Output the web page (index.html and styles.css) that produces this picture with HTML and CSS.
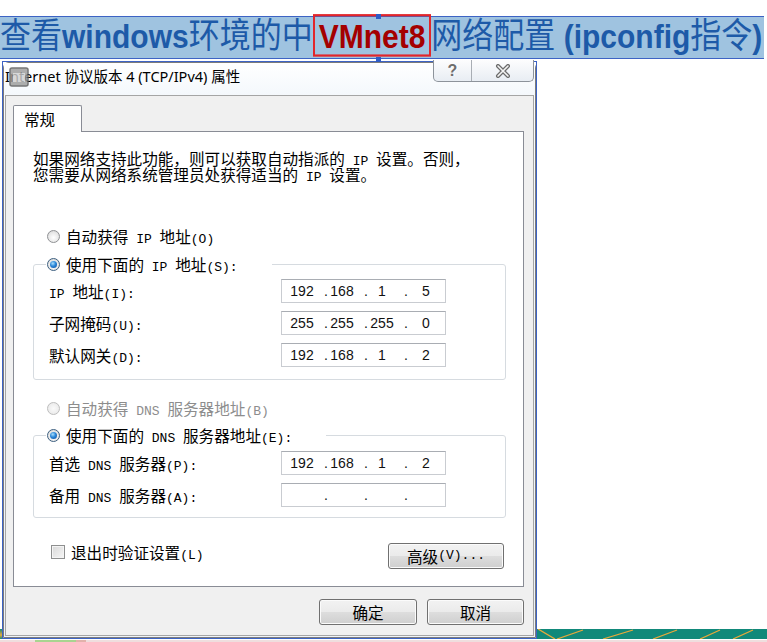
FILE: index.html
```html
<!DOCTYPE html>
<html lang="zh-CN">
<head>
<meta charset="utf-8">
<title>VMnet8 网络配置</title>
<link rel="stylesheet" href="styles.css">
</head>
<body>
<div class="page">
  <header class="band">
    <h1 class="headline">查看<b class="en">windows</b>环境的中<span class="vm en">VMnet8</span>网络配置<b class="en"> (ipconfig</b>指令<b class="en">)</b></h1>
    <i class="handle handle-top"></i>
    <i class="handle handle-bottom"></i>
  </header>

  <div class="stage">
    <div class="slide-edge slide-edge--left"><span class="stripe"></span></div>
    <div class="dialog">
      <div class="window">
        <div class="titlebar">
          <svg class="app-icon" width="20" height="20" viewBox="0 0 20 20">
            <rect x="1" y="1" width="18" height="18" rx="2" fill="#9a9a9a" stroke="#555" stroke-width="1.5"/>
            <rect x="4" y="6" width="12" height="9" fill="#cfcfcf"/>
          </svg>
          <div class="title-text">Internet 协议版本 4 (TCP/IPv4) 属性</div>
          <div class="caps">
            <div class="cap cap-help">?</div>
            <div class="cap cap-close">
              <svg width="16" height="14" viewBox="0 0 16 14">
                <path d="M3 2 L13 12 M13 2 L3 12" stroke="#6b6b6b" stroke-width="4" stroke-linecap="round"/>
                <path d="M3 2 L13 12 M13 2 L3 12" stroke="#f4f4f4" stroke-width="1.6" stroke-linecap="round"/>
              </svg>
            </div>
          </div>
        </div>

        <div class="client">
          <div class="tab">常规</div>
          <div class="panel">
            <div class="intro">
              <span class="line">如果网络支持此功能，则可以获取自动指派的<span class="m"> IP </span>设置。否则，</span>
              <span class="line">您需要从网络系统管理员处获得适当的<span class="m"> IP </span>设置。</span>
            </div>

            <div class="opt opt-auto-ip">
              <span class="radio"></span>
              <span>自动获得<span class="m"> IP </span>地址<span class="m">(O)</span></span>
            </div>

            <div class="group group-ip">
              <div class="legend">
                <span class="radio on"><span class="dot"></span></span>
                <span>使用下面的<span class="m"> IP </span>地址<span class="m">(S):</span></span>
              </div>
              <div class="rows">
                <span class="lbl"><span class="m">IP </span>地址<span class="m">(I):</span></span>
                <div class="ipbox"><span class="t t1">192</span><span class="t d1">.</span><span class="t t2">168</span><span class="t d2">.</span><span class="t t3">1</span><span class="t d3">.</span><span class="t t4">5</span></div>
                <span class="lbl">子网掩码<span class="m">(U):</span></span>
                <div class="ipbox"><span class="t t1">255</span><span class="t d1">.</span><span class="t t2">255</span><span class="t d2">.</span><span class="t t3">255</span><span class="t d3">.</span><span class="t t4">0</span></div>
                <span class="lbl">默认网关<span class="m">(D):</span></span>
                <div class="ipbox"><span class="t t1">192</span><span class="t d1">.</span><span class="t t2">168</span><span class="t d2">.</span><span class="t t3">1</span><span class="t d3">.</span><span class="t t4">2</span></div>
              </div>
            </div>

            <div class="opt opt-auto-dns is-disabled">
              <span class="radio"></span>
              <span>自动获得<span class="m"> DNS </span>服务器地址<span class="m">(B)</span></span>
            </div>

            <div class="group group-dns">
              <div class="legend">
                <span class="radio on"><span class="dot"></span></span>
                <span>使用下面的<span class="m"> DNS </span>服务器地址<span class="m">(E):</span></span>
              </div>
              <div class="rows">
                <span class="lbl">首选<span class="m"> DNS </span>服务器<span class="m">(P):</span></span>
                <div class="ipbox"><span class="t t1">192</span><span class="t d1">.</span><span class="t t2">168</span><span class="t d2">.</span><span class="t t3">1</span><span class="t d3">.</span><span class="t t4">2</span></div>
                <span class="lbl">备用<span class="m"> DNS </span>服务器<span class="m">(A):</span></span>
                <div class="ipbox"><span class="t t1"></span><span class="t d1">.</span><span class="t t2"></span><span class="t d2">.</span><span class="t t3"></span><span class="t d3">.</span><span class="t t4"></span></div>
              </div>
            </div>

            <div class="panel-foot">
              <label class="check">
                <span class="box"></span>
                <span>退出时验证设置<span class="m">(L)</span></span>
              </label>
              <div class="btn btn-adv">高级<span class="m">(V)...</span></div>
            </div>
          </div>

          <div class="actions">
            <div class="btn btn-ok">确定</div>
            <div class="btn btn-cancel">取消</div>
          </div>
        </div>
      </div>
    </div>
    <div class="slide-edge">
      <svg class="stripe-svg" width="230" height="10" viewBox="0 0 230 10">
        <rect width="230" height="10" fill="#11897a"/>
        <g stroke="#e9a93a" stroke-width="1.3">
          <line x1="1" y1="0" x2="18" y2="10"/>
          <line x1="20" y1="10" x2="46" y2="1"/>
          <line x1="66" y1="10" x2="96" y2="1"/>
          <line x1="116" y1="10" x2="140" y2="1"/>
          <line x1="163" y1="10" x2="183" y2="1"/>
          <line x1="196" y1="10" x2="216" y2="1"/>
        </g>
      </svg>
    </div>
  </div>

  <div class="floor"><i class="floor-green"></i><i class="floor-red"></i></div>
</div>
</body>
</html>
```

FILE: styles.css
```css
html, body {
  margin: 0;
  padding: 0;
  background: #ffffff;
}

.page {
  width: 767px;
  height: 642px;
  overflow: hidden;
  position: relative;
}

/* ---------- title band ---------- */
.band {
  margin-top: 16px;
  width: 764px;
  height: 41px;
  border-top: 1px solid #3d63c4;
  border-bottom: 1px solid #3d63c4;
  background: #9fc3e0;
  position: relative;
}

.headline {
  margin: 0;
  font-family: "Noto Sans CJK SC", sans-serif;
  font-weight: 400;
  font-size: 31px;
  line-height: 41px;
  color: #1d5aa8;
  white-space: nowrap;
  transform: translateY(-5px) scaleY(1.12);
  transform-origin: 50% 45%;
}

.en {
  font-family: "Liberation Sans", sans-serif;
  font-weight: 700;
  font-size: 30px;
}

.vm {
  color: #a40000;
  border: 2px solid #e2262b;
  padding: 1px 4px 0;
}

.handle {
  position: absolute;
  left: 376px;
  width: 5px;
  height: 5px;
  background: #2f5cc6;
}
.handle-top { top: -3px; }
.handle-bottom { bottom: -4px; }

/* ---------- stage ---------- */
.stage {
  display: flex;
  margin-top: 2px;
  height: 578px;
}

.slide-edge {
  flex: 1;
  display: flex;
  align-items: flex-end;
  overflow: hidden;
}
.slide-edge--left {
  flex: 0 0 2px;
}
.stripe {
  display: block;
  width: 2px;
  height: 10px;
  background: linear-gradient(#11897a, #e9a93a 60%, #11897a);
}
.stripe-svg { display: block; }

.dialog {
  box-sizing: border-box;
  width: 535px;
  border: 1px solid #3d63c4;
  display: flex;
  flex-direction: column;
  background: #ffffff;
}

.window {
  flex: 1;
  display: flex;
  flex-direction: column;
  border: 1px solid #7b7b7b;
  border-radius: 6px 6px 0 0;
  background: linear-gradient(#fbfcfe, #eef3f9);
}

.titlebar {
  height: 32px;
  display: flex;
  justify-content: space-between;
  align-items: flex-start;
  position: relative;
  background: linear-gradient(180deg, #ffffff 0%, #f4f8fc 100%);
}

.app-icon {
  position: absolute;
  left: 5px;
  top: 4px;
  opacity: 0.8;
}

.title-text {
  margin: 3px 0 0 1px;
  font-family: "Noto Sans", "Noto Sans CJK SC", sans-serif;
  font-size: 14.5px;
  line-height: 20px;
  color: #000;
  white-space: nowrap;
}

.caps {
  display: flex;
  height: 21px;
  margin: -3px 1px 0 0;
  border: 1px solid #8d939b;
  border-top: 0;
  border-radius: 0 0 5px 5px;
  overflow: hidden;
  background: linear-gradient(#fdfdfe, #e8edf3);
}
.cap {
  display: flex;
  align-items: center;
  justify-content: center;
}
.cap-help {
  width: 37px;
  border-right: 1px solid #a8adb4;
  font-family: "Liberation Sans", sans-serif;
  font-weight: 700;
  font-size: 16px;
  color: #6e6e6e;
  text-shadow: 0 0 1px #fff, 1px 0 0 #fff;
}
.cap-close { width: 61px; }

/* ---------- client area ---------- */
.client {
  flex: 1;
  display: flex;
  flex-direction: column;
  margin: 0 1px 1px 1px;
  border: 1px solid #a5a5a5;
  background: #f0f0f0;
  padding: 9px 9px 0 7px;
  font-family: "Noto Sans CJK SC", sans-serif;
  font-size: 15.6px;
  line-height: 16px;
  color: #000;
}

.m {
  font-family: "Liberation Mono", monospace;
  font-size: 13px;
  line-height: 10px;
  white-space: pre;
}

.tab {
  box-sizing: border-box;
  width: 69px;
  height: 27px;
  margin-bottom: -1px;
  padding: 5px 0 0 10px;
  border: 1px solid #898c95;
  border-bottom: 0;
  border-radius: 2px 2px 0 0;
  background: #ffffff;
  position: relative;
  z-index: 1;
}

.panel {
  border: 1px solid #898c95;
  background: #ffffff;
  padding-bottom: 17px;
}

.intro {
  display: flex;
  flex-direction: column;
  margin: 18px 0 0 19px;
}
.line {
  display: block;
  height: 16px;
  white-space: nowrap;
}

.opt {
  display: flex;
  align-items: center;
  gap: 6px;
  height: 16px;
  margin-left: 33px;
}
.opt-auto-ip { margin-top: 46px; }
.opt-auto-dns { margin-top: 20px; }
.is-disabled { color: #8d8d8d; }

.radio {
  box-sizing: border-box;
  width: 13px;
  height: 13px;
  border-radius: 50%;
  border: 1px solid #8f9194;
  background: radial-gradient(circle at 50% 60%, #ffffff 0%, #e9e9e9 55%, #cfcfcf 100%);
  display: flex;
  align-items: center;
  justify-content: center;
  flex: none;
}
.is-disabled .radio {
  border-color: #bdbdbd;
  background: radial-gradient(circle, #fafafa, #e6e6e6);
}
.radio.on {
  border-color: #3d5f80;
}
.dot {
  width: 7px;
  height: 7px;
  border-radius: 50%;
  background: radial-gradient(circle at 40% 35%, #a9defc 0%, #2a86d8 45%, #0f4b9a 100%);
}

.group {
  box-sizing: border-box;
  width: 473px;
  margin-left: 19px;
  border: 1px solid #d6dbe0;
  border-radius: 3px;
  padding-left: 15px;
}
.group-ip { margin-top: 20px; padding-bottom: 12px; }
.group-dns { margin-top: 19px; padding-bottom: 10px; }

.legend {
  display: flex;
  align-items: center;
  gap: 6px;
  width: max-content;
  height: 16px;
  margin: -9px 0 0 -3px;
  padding: 0 34px 0 1px;
  background: #ffffff;
}

.rows {
  display: grid;
  grid-template-columns: 232px 165px;
  grid-auto-rows: 24px;
  row-gap: 8px;
  align-items: center;
  margin-top: 7px;
}
.group-dns .rows { margin-top: 8px; }

.lbl { white-space: nowrap; }

.ipbox {
  box-sizing: border-box;
  height: 24px;
  border: 1px solid #c9ccd1;
  border-top-color: #a9adb3;
  background: #ffffff;
  display: flex;
  align-items: center;
  font-family: "Liberation Sans", sans-serif;
  font-size: 14px;
  color: #111;
}
.t {
  display: flex;
  justify-content: center;
  white-space: nowrap;
}
.t1 { width: 40px; }
.d1 { width: 8px; }
.t2 { width: 24px; }
.d2 { width: 24px; }
.t3 { width: 8px; }
.d3 { width: 40px; }
.t4 { width: 0; }

.panel-foot {
  display: flex;
  justify-content: space-between;
  align-items: flex-start;
  margin: 25px 19px 0 37px;
}

.check {
  display: flex;
  align-items: center;
  gap: 6px;
  height: 16px;
  margin-top: 1px;
}
.box {
  box-sizing: border-box;
  width: 14px;
  height: 14px;
  border: 1px solid #8e8f8f;
  background: linear-gradient(135deg, #d8d8d8, #f6f6f6);
  box-shadow: inset 0 0 0 1px #f4f4f4;
}

.btn {
  box-sizing: border-box;
  height: 26px;
  display: flex;
  align-items: center;
  justify-content: center;
  border: 1px solid #707070;
  border-radius: 3px;
  background: linear-gradient(#f2f2f2 0%, #ebebeb 48%, #dddddd 52%, #cfcfcf 100%);
  box-shadow: inset 0 0 0 1px #fbfbfb;
  white-space: nowrap;
}
.btn-adv { width: 116px; }

.actions {
  display: flex;
  justify-content: flex-end;
  gap: 10px;
  margin-top: 12px;
}
.btn-ok { width: 98px; }
.btn-cancel { width: 97px; }

/* ---------- slide floor ---------- */
.floor {
  display: flex;
  height: 3px;
  margin-top: 1px;
  background: #efdede;
}
.floor-green {
  margin-left: 35px;
  width: 41px;
  background: #a9d490;
}
.floor-red {
  width: 10px;
  background: #e2b2ab;
}
```
